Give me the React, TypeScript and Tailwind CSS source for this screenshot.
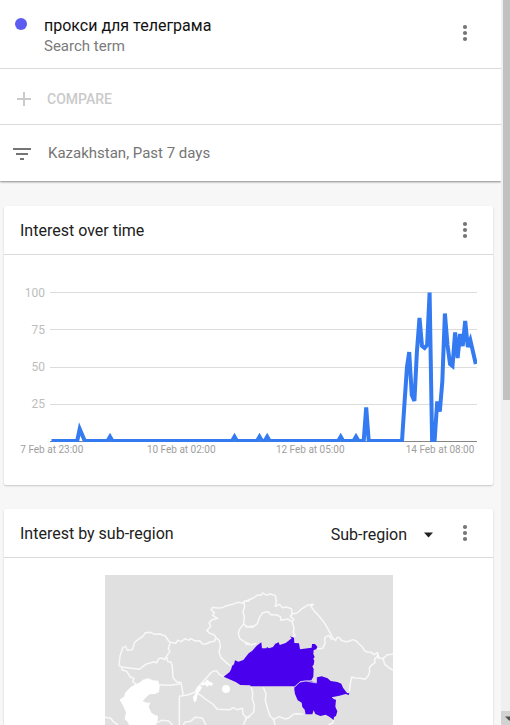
import { ReactNode } from "react";

function MoreIcon() {
  return (
    <svg width="6" height="18" viewBox="0 0 6 18" className="shrink-0 fill-[#757575]">
      <circle cx="3" cy="3" r="2.1" />
      <circle cx="3" cy="9" r="2.1" />
      <circle cx="3" cy="15" r="2.1" />
    </svg>
  );
}

function Card({ title, className, actions, children }: { title: string; className: string; actions?: ReactNode; children: ReactNode }) {
  return (
    <section className={`ml-1 w-[489px] overflow-hidden rounded-[2px] bg-white shadow-[0_1px_2px_rgba(0,0,0,0.2)] ${className}`}>
      <header className="flex h-[49px] items-center border-b border-[#dadada] pr-[25px] pl-4">
        <h2 className="flex-1 pt-[2px] text-[16px] leading-5 text-[#212121]">{title}</h2>
        {actions}
        <MoreIcon />
      </header>
      {children}
    </section>
  );
}

const ticks = [
  { y: 292.5, labelY: 297, label: "100" },
  { y: 329.5, labelY: 334, label: "75" },
  { y: 367.5, labelY: 371, label: "50" },
  { y: 404.5, labelY: 408, label: "25" },
];

const bumps = [110, 234.5, 259.5, 267.2, 340.7, 356];

const trend =
  "M51.5 441 L77.2 441 L79.7 429 L84.8 441 " +
  bumps.map((x) => `L${x - 2.5} 441 L${x} 436.7 L${x + 2.5} 441`).join(" ") +
  " L363.7 441 L366.2 407.5 L368.7 441 L402 441 L404.5 403 L407 367 L409.2 352 L411.8 395 L414.4 401 L416.9 352 L419.5 318 L422 346 L424.6 348 L427.1 345 L429.6 292.5 L432.1 441 L434.6 441 L437.2 401.5 L439.8 411.5 L442.3 382 L444.9 313.5 L447.5 345 L450 364 L452.5 366 L455.1 332.5 L457.6 358 L460.1 334 L462.7 346 L465.2 321 L467.8 347 L470.3 340 L475.8 364";

function TrendChart() {
  return (
    <svg width="489" height="230" viewBox="4 255 489 230" className="block font-[Roboto,sans-serif]">
      <defs>
        <clipPath id="plot">
          <rect x="50" y="292" width="427" height="150" />
        </clipPath>
      </defs>
      {ticks.map((t) => (
        <g key={t.label}>
          <line x1="50" x2="477" y1={t.y} y2={t.y} stroke="#dcdcdc" />
          <text x="45" y={t.labelY} textAnchor="end" fontSize="12" fill="#bdbdbd">{t.label}</text>
        </g>
      ))}
      <line x1="50" x2="477" y1="441.5" y2="441.5" stroke="#858585" />
      <path d={trend} clipPath="url(#plot)" fill="none" stroke="#347af0" strokeWidth="4" />
      <g fontSize="10" fill="#9e9e9e" textAnchor="middle">
        <text x="51.8" y="453">7 Feb at 23:00</text>
        <text x="181.2" y="453">10 Feb at 02:00</text>
        <text x="310.2" y="453">12 Feb at 05:00</text>
        <text x="440" y="453">14 Feb at 08:00</text>
      </g>
    </svg>
  );
}

function RegionMap() {
  return (
    <svg width="288" height="150" viewBox="0 0 864 450" className="mx-auto mt-[17px] block bg-[#e0e0e0]">
      <g transform="translate(-15 -15)" fill="none" stroke="#f8f8f8" strokeWidth="4.5" strokeLinejoin="round">
        <path d="M450 92 L432 94 L428 100 L412 97 L398 103 L380 107 L367 113 L352 114 L338 112 L333 120 L343 128 L338 136 L353 145 L336 149 L327 158 L332 169 L320 182 L330 190 L343 195 L348 203 L344 214 L330 216 L318 222 L308 222 L299 212 L286 213 L272 206 L266 211 L256 206 L243 215 L234 211 L227 220 L208 216" />
        <path d="M432 94 L434 112 L429 124 L433 142 L431 162 L418 179 L415 190 L419 205 L434 216 L450 222 M431 162 L441 170 L460 168" />
        <path d="M348 203 L358 212 L361 229 L357 246 L363 263 L378 277 L392 288" />
        <path d="M208 216 L196 198 L180 192 L164 193 L151 187 L136 188 L128 200 L116 207 L104 217 L97 239 L82 241 L77 229 L69 232 L60 258 L57 286 L65 291 L118 298 L137 283 L163 275 L170 279 L176 266 L185 264 L194 269 L199 259 L210 244 L205 236 L210 219 M199 259 L204 275 L213 276 L217 290 L219 323 L230 335 L243 338 L248 366 L249 376" />
        <path d="M65 291 L66 300 L80 304 L91 321 L102 325 L98 334 L108 343 M178 344 L206 346 L240 342 M238 379 L262 375 L285 367 L291 355 L309 335 L332 309 L340 303 L350 303 L359 314 L371 320" />
        <path d="M238 379 L238 465 M290 368 L302 376 L316 387 L338 402 L352 418 L390 419 L399 413 L411 419 L427 415 L429 432 L440 443 L450 440 M250 465 L254 457 L272 454 L285 442 L307 444 L318 465 M440 443 L430 465 M15 442 L32 445 L43 458 L55 465 M172 458 L185 451 L206 453 L218 465" />
      </g>
      <g transform="translate(420 -15)" fill="none" stroke="#f8f8f8" strokeWidth="4.5" strokeLinejoin="round">
        <path d="M0 94 L25 84 L38 75 L48 76 L54 69 L63 75 L77 72 L91 77 L94 93 L91 109 L103 103 L113 113 L124 111 L139 116 L142 132 L156 129 L171 116 L187 106 L205 103 L198 110 L207 122 L222 138 L239 160 L253 184 L264 205" />
        <path d="M0 170 L23 172 L37 161 L43 143 L53 128 L68 125 L79 135 L94 134 L107 141 L108 151 L128 147 L142 156 M142 132 L136 139 L146 148 L142 156 L147 174 L145 188 L150 196 L141 203 M0 222 L20 224 L34 220" />
        <path d="M264 209 L257 205 L254 197 L245 199 L239 205 L240 220 L233 235 L224 236 L214 236 M264 205 L272 211 L276 202 L285 204 L289 211 L302 215 L314 213 L323 209 L334 213 L342 222 L352 231 L358 241 L366 246 L379 247 L387 254 L397 248 L398 257 L389 268 L390 278 L379 286 L373 293 L374 306 L369 319 L360 328 L347 325 L330 324 L320 321 L316 340 L313 365" />
        <path d="M397 263 L414 266 L426 255 L444 252 M414 266 L420 284 L433 294 L444 300 M397 248 L403 265" />
        <path d="M18 349 L23 367 L22 387 L28 405 L26 426 L15 437 L0 445 M55 352 L63 372 L61 392 L68 416 L75 438 L86 448 L103 440 L121 447 L133 443 L146 432 L158 431 L175 433 M86 448 L90 465 M266 450 L263 459 L250 465" />
      </g>
      <g transform="translate(-15 -15)" fill="#ffffff">
        <path d="M107 343 L121 337 L128 329 L145 325 L158 331 L175 332 L179 348 L177 366 L165 372 L151 372 L143 377 L128 393 L141 398 L151 398 L146 410 L154 428 L165 435 L174 438 L173 454 L168 465 L87 465 L83 456 L74 447 L78 427 L70 409 L59 389 L73 379 L75 369 L92 351 Z" />
        <path d="M279 382 L287 369 L291 353 L300 347 L306 352 L301 361 L293 371 L289 393 L282 397 Z M302 340 L315 337 L321 328 L329 335 L339 339 L336 348 L327 345 L321 351 L316 344 L306 347 Z" />
        <circle cx="378" cy="357" r="12" />
      </g>
      <g fill="#4900ed">
        <path
          transform="translate(-15 -15)"
          d="M371 320 L389 306 L394 296 L396 288 L402 283 L405 271 L415 275 L430 270 L446 250 L457 242 L470 227 L484 217 L486 235 L499 235 L501 231 L507 235 L519 231 L526 221 L536 217 L539 225 L557 219 L575 205 L570 199 L582 203 L583 219 L597 220 L600 238 L635 233 L636 222 L645 222 L652 230 L649 238 L641 240 L640 252 L644 261 L640 266 L643 273 L641 284 L637 289 L641 297 L640 320 L634 331 L602 333 L585 349 L451 349 L451 346 L421 345 L407 336 Z"
        />
        <path
          transform="translate(420 -15)"
          d="M148 352 L165 336 L180 333 L198 334 L214 338 L216 322 L230 319 L248 325 L257 333 L277 336 L289 341 L294 353 L306 369 L313 370 L311 375 L302 372 L283 377 L260 382 L267 388 L273 389 L271 410 L277 424 L273 438 L267 441 L266 450 L253 440 L242 434 L226 438 L211 432 L206 421 L202 433 L182 433 L179 419 L172 411 L170 398 L158 391 L150 372 L148 359 Z"
        />
      </g>
      <path d="M569 336 L585 321 L603 318 L634 324 L635 308" fill="none" stroke="#c9b8f4" strokeWidth="3" />
    </svg>
  );
}

export default function App() {
  return (
    <div className="flex h-[725px] w-[510px] overflow-hidden bg-[#f7f7f7] font-[Roboto,sans-serif]">
      <main className="w-[501px] shrink-0">
        <div className="bg-white shadow-[0_1px_2px_rgba(0,0,0,0.45)]">
          <div className="flex h-[69px] border-b border-[#dadada] pr-[33px] pl-[15px]">
            <span className="mt-[18px] size-3 rounded-full bg-[#5c5cf1]" />
            <div className="mt-4 ml-[17px] flex-1">
              <div className="text-[16px] leading-5 text-[#111111]">прокси для телеграма</div>
              <div className="text-[15px] leading-5 text-[#7b7b7b]">Search term</div>
            </div>
            <div className="mt-6">
              <MoreIcon />
            </div>
          </div>
          <div className="flex h-14 items-center border-b border-[#dadada] pt-[5px] pl-[17px] text-[#cacaca]">
            <svg width="14" height="14" viewBox="0 0 14 14" className="block" fill="none" stroke="currentColor" strokeWidth="2">
              <path d="M7 0V14M0 7H14" />
            </svg>
            <span className="ml-4 text-[14px] leading-5 font-medium">COMPARE</span>
          </div>
          <div className="flex h-14 items-center pl-[13px] text-[#757575]">
            <svg width="18" height="12" viewBox="0 0 18 12" className="mt-[2px] block fill-current">
              <path d="M0 0h18v2H0zM3 5h12v2H3zM7 10h4v2H7z" />
            </svg>
            <span className="ml-[17px] text-[15px] leading-5">Kazakhstan, Past 7 days</span>
          </div>
        </div>

        <Card title="Interest over time" className="mt-[25px] h-[279px]">
          <TrendChart />
        </Card>

        <Card
          title="Interest by sub-region"
          className="mt-6 h-[240px]"
          actions={
            <button className="mr-[29px] flex items-center pt-1 text-[16px] leading-5 text-[#212121]">
              Sub-region
              <svg width="9" height="6" viewBox="0 0 9 6" className="ml-[17px] fill-[#212121]">
                <path d="M0 0.5H9L4.5 5.5Z" />
              </svg>
            </button>
          }
        >
          <RegionMap />
        </Card>
      </main>

      <aside className="flex w-[9px] shrink-0 flex-col bg-[#f0f0f0]">
        <div className="ml-[2px] h-[400px] bg-[#c1c1c1]" />
        <div className="mt-auto flex h-[14px] items-center bg-[#d2d2d2] pl-1">
          <svg width="5" height="5" viewBox="0 0 5 5" className="fill-[#505050]">
            <path d="M0 0.5H5V4.5H4Z" />
          </svg>
        </div>
      </aside>
    </div>
  );
}
